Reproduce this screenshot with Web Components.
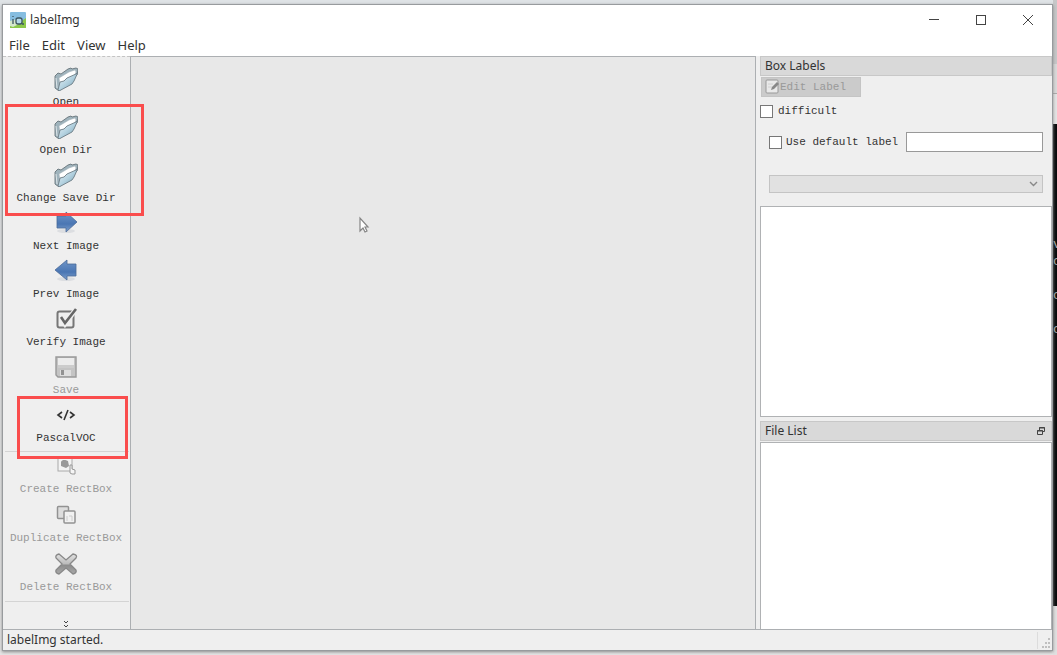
<!DOCTYPE html>
<html lang="en">
<head>
<meta charset="utf-8">
<title>labelImg</title>
<style>
  html, body { height: 100%; margin: 0; }
  body { font: 12px/16px "Noto Sans", "Open Sans", sans-serif; color: #333; background: #e3e4e5; overflow: hidden; }
</style>
</head>
<body>
<desk-top></desk-top>

<script>
const define = (name, html) => customElements.define(name, class extends HTMLElement {
  constructor() {
    super();
    this.attachShadow({ mode: 'open' }).innerHTML =
      '<style>*{box-sizing:border-box}button{font:inherit;color:inherit;border:0;background:none;padding:0;margin:0}svg{display:block}</style>' +
      (typeof html === 'function' ? html(this) : html);
  }
});

const folder = `
  <defs><linearGradient id="f" x1="0" y1="0" x2="1" y2="1"><stop offset="0" stop-color="#f2f7f9"/><stop offset=".5" stop-color="#b4d2e0"/><stop offset="1" stop-color="#6b96aa"/></linearGradient></defs>
  <path d="M1 9 4 6 7 7 14 2 17 1 18 2 22 1 24 2 23 8 5 24 1 21Z" fill="#9fb3bc" stroke="#66747b" stroke-width=".9"/>
  <path d="M5 11 15 5 21 3 22 5 20 10 6 17Z" fill="#fff" stroke="#a4b1b8" stroke-width=".5"/>
  <path d="M4 23 6 15 10 14 13 11 22 7 24 5 20 14 18 17 5 24Z" fill="url(#f)" stroke="#6c7c85" stroke-width=".9"/>
  <path d="M2 11 3 21" stroke="#dce5e9" fill="none"/>`;
const arrow = (d) => `
  <defs><linearGradient id="a" x1="0" y1="0" x2="0" y2="1"><stop offset="0" stop-color="#6f95c8"/><stop offset=".6" stop-color="#4a76b3"/><stop offset="1" stop-color="#7fa0cd"/></linearGradient></defs>
  <ellipse cx="12" cy="20" rx="9" ry="2" fill="#dcdee1"/><path d="${d}" fill="url(#a)" stroke="#4a6a98" stroke-width=".8"/>`;
const icons = {
  open: folder,
  next: arrow('M3 5H12V1L23 11 12 21V17H3Z'),
  prev: arrow('M22 5H13V1L1 11 13 21V17H22Z'),
  verify: `<rect x="3.500" y="4.500" width="16" height="16" rx="2" fill="none" stroke="#777" stroke-width="2"/><path d="M7 11 11 17 22 2" fill="none" stroke="#efefef" stroke-width="5"/><path d="M7 10 11 16 22 2" fill="none" stroke="#666" stroke-width="2.600"/>`,
  save: `<path d="M2 2H22V22H4L2 20Z" fill="#c4c4c4" stroke="#999" stroke-width="1.400"/><rect x="4" y="3" width="16" height="10" fill="#ececec"/><path d="M4 10H20V13H4Z" fill="#ccc"/><path d="M6 15H17V21H6Z" fill="#dedede"/><path d="M7 15H10V20H7Z" fill="#929292"/>`,
  code: `<path d="M8 9 4 12 8 15M16 9 20 12 16 15M14 7 10 17" fill="none" stroke="#333" stroke-width="1.600"/>`,
  create: `<rect x="4" y="3" width="14" height="14" fill="#f3f3f3" stroke="#aaa"/><path d="M7 8C8 5 12 6 14 7L15 12 12 14 7 12Z" fill="#999"/><path d="M16 19V11L18 11V15L21 16V20H18Z" fill="#f5f5f5" stroke="#999"/>`,
  duplicate: `<rect x="3.500" y="3.500" width="11" height="12" rx="1" fill="#ddd" stroke="#929292" stroke-width="1.500"/><rect x="10" y="8" width="11" height="12" rx="1" fill="#f1f1f1" stroke="#929292" stroke-width="1.500"/><path d="M13 18V13M15 13H18V18" stroke="#ccc" fill="none"/>`,
  remove: `<defs><linearGradient id="x" x1="0" y1="0" x2="0" y2="1"><stop stop-color="#e2e2e2"/><stop offset=".5" stop-color="#bbb"/><stop offset=".55" stop-color="#8b8b8b"/><stop offset="1" stop-color="#aaa"/></linearGradient></defs><path d="M5 2 12 8 19 2Q24 3 22 6L16 12 22 18Q23 21 19 22L12 16 5 22Q1 21 2 18L8 12 2 6Q1 3 5 2Z" fill="url(#x)" stroke="#888" stroke-width="1.300"/>`
};

define('tool-item', el => `
  <style>
    :host { display: block; }
    button { display: flex; flex-direction: column; align-items: center; gap: 3px; width: 100%; height: 48px; white-space: nowrap; font: 11px/16px "Liberation Mono", monospace; color: #333; }
    button:disabled { color: #999; }
    svg { width: 24px; height: 24px; flex: none; }
  </style>
  <button type="button" ${el.hasAttribute('disabled') ? 'disabled' : ''}><svg viewBox="0 0 24 24" aria-hidden="true">${icons[el.getAttribute('icon')]}</svg><slot></slot></button>`);

define('mark-box', `<style>:host{display:block;box-sizing:border-box;position:absolute;border:3px solid #fa4d4d;z-index:2;pointer-events:none}</style>`);

define('title-bar', `
  <style>
    :host { display: flex; align-items: center; height: 30px; background: #fff; padding: 0 1px 0 7px; }
    h1 { font: inherit; margin: 0 auto 0 4px; }
    button { width: 47px; height: 30px; display: grid; place-items: center; }
  </style>
  <svg width="16" height="16" viewBox="0 0 16 16" aria-hidden="true"><rect width="16" height="16" rx="1" fill="#86bde0"/><path d="M0 10 6 8 9 11 16 6V16H0Z" fill="#8cc84b"/><path d="M0 9 7 7 9 12 3 15 0 14Z" fill="#d5e8cb"/><rect x="6" y="6" width="6" height="6" rx="2" fill="#b4d8e8" stroke="#3c5560" stroke-width="1.300"/><path d="M3 7V12M3 4V5M12 12H14" stroke="#3c5560" stroke-width="1.300"/></svg>
  <h1>labelImg</h1>
  <button type="button" aria-label="Minimize"><svg width="12" height="12"><path d="M1 5.500H11" stroke="#444"/></svg></button>
  <button type="button" aria-label="Maximize"><svg width="12" height="12"><rect x="1.500" y="1.500" width="9" height="9" fill="none" stroke="#444"/></svg></button>
  <button type="button" aria-label="Close"><svg width="12" height="12"><path d="M1 1 11 11M11 1 1 11" stroke="#444"/></svg></button>`);

define('menu-bar', `
  <style>:host { display: flex; gap: 12px; box-sizing: border-box; height: 21px; padding: 0 6px 2px; background: #fff; font-size: 13px; } nav { display: contents; }</style>
  <nav><button type="button">File</button><button type="button">Edit</button><button type="button">View</button><button type="button">Help</button></nav>`);

define('tool-bar', `
  <style>
    :host { display: flex; flex-direction: column; position: relative; width: 127px; flex: none; padding: 10px 1px 0 0; box-sizing: border-box; border-top: 1px dashed #c4c4c4; background: #efefef; }
    .group { display: grid; gap: 1px; padding: 2px 0 1px; border: solid #d4d4d4; border-width: 1px 0; margin: 0 0 0 2px; }
    .group tool-item { margin-left: -2px; }
    .more { margin: auto auto 0; height: 10px; }
    .dirs { left: 2px; top: 47px; width: 139px; height: 112px; }
    .format { left: 14px; top: 339px; width: 111px; height: 63px; }
  </style>
  <tool-item icon="open">Open</tool-item>
  <tool-item icon="open">Open Dir</tool-item>
  <tool-item icon="open">Change Save Dir</tool-item>
  <tool-item icon="next">Next Image</tool-item>
  <tool-item icon="prev">Prev Image</tool-item>
  <tool-item icon="verify">Verify Image</tool-item>
  <tool-item icon="save" disabled>Save</tool-item>
  <tool-item icon="code">PascalVOC</tool-item>
  <div class="group">
    <tool-item icon="create" disabled>Create RectBox</tool-item>
    <tool-item icon="duplicate" disabled>Duplicate RectBox</tool-item>
    <tool-item icon="remove" disabled>Delete RectBox</tool-item>
  </div>
  <button class="more" type="button" aria-label="More tools"><svg width="6" height="8"><path d="M1 1 3 3 5 1M1 5 3 7 5 5" fill="none" stroke="#444"/></svg></button>
  <mark-box class="dirs"></mark-box>
  <mark-box class="format"></mark-box>`);

define('image-canvas', `
  <style>
    :host { display: block; position: relative; flex: 1; background: #e8e8e8; border: 1px solid #acafb2; border-bottom: 0; }
    svg { position: absolute; left: 227px; top: 159px; }
  </style>
  <svg width="12" height="18" aria-hidden="true"><path d="M2 2V15L5 12 7 16 9 15 7 11H10Z" fill="#fff" stroke="#858585" stroke-width="1.200"/></svg>`);

define('dock-title', `
  <style>
    :host { display: flex; align-items: center; justify-content: space-between; height: 20px; flex: none; padding: 0 6px 0 4px; box-sizing: border-box; background: #d9d9d9; border: 1px solid #c8c8c8; }
    h2 { font: inherit; margin: 0; }
  </style>
  <h2><slot></slot></h2><slot name="action"></slot>`);

define('label-dock', `
  <style>
    :host { display: flex; flex-direction: column; height: 361px; flex: none; font: 11px/16px "Liberation Mono", monospace; }
    dock-title { font: 12px/16px "Noto Sans", sans-serif; }
    .edit { display: flex; align-items: center; align-self: flex-start; width: 100px; height: 20px; margin: 1px 0 0 1px; padding-left: 3px; color: #999; background: #cbcbcb; border: 1px solid #c4c4c4; }
    label { display: flex; align-items: center; gap: 4px; white-space: nowrap; }
    input { appearance: none; margin: 0; background: #fff; border: 1px solid #777; border-radius: 0; }
    input[type=checkbox] { width: 13px; height: 13px; }
    .difficult { margin: 6px 0 0; gap: 5px; }
    .default { display: flex; align-items: center; gap: 8px; margin: 13px 9px 0 9px; }
    input[type=text] { flex: 1; min-width: 0; height: 20px; border-color: #999; }
    .combo { position: relative; display: block; margin: 23px 9px 0; }
    select { appearance: none; display: block; width: 100%; height: 18px; border: 1px solid #c4c4c4; border-radius: 0; background: #e1e1e1; opacity: 1; }
    .combo svg { position: absolute; right: 5px; top: 6px; pointer-events: none; }
    .list { flex: 1; margin-top: 13px; background: #fff; border: 1px solid #b0b2b4; }
  </style>
  <dock-title>Box Labels</dock-title>
  <button class="edit" type="button" disabled><svg width="15" height="16" viewBox="0 0 15 16" aria-hidden="true"><rect x="1" y="1" width="12" height="13" rx="1" fill="#e9e9e9" stroke="#999"/><path d="M3 5H8M3 8H7" stroke="#d0d0d0"/><path d="M6 11 7 8 12 3 14 5 9 10Z" fill="#888"/></svg>Edit Label</button>
  <label class="difficult"><input type="checkbox">difficult</label>
  <div class="default"><label><input type="checkbox">Use default label</label><input type="text" aria-label="Default label"></div>
  <div class="combo"><select disabled aria-label="Filter labels"></select><svg width="9" height="6"><path d="M1 1 4.500 4.500 8 1" fill="none" stroke="#888" stroke-width="1.400"/></svg></div>
  <div class="list"></div>`);

define('file-dock', `
  <style>
    :host { display: flex; flex-direction: column; flex: 1; margin-top: 4px; }
    .list { flex: 1; margin-top: 1px; background: #fff; border: 1px solid #b0b2b4; border-bottom: 0; }
  </style>
  <dock-title>File List<button slot="action" type="button" aria-label="Float"><svg width="8" height="8"><path d="M2.500 3V.5H7.500V4.500H6M2 1H8M.5 3.500H5.500V7.500H.5ZM0 4H6" fill="none" stroke="#444"/></svg></button></dock-title>
  <div class="list"></div>`);

define('status-bar', `
  <style>
    :host { display: flex; align-items: center; justify-content: space-between; height: 21px; flex: none; padding-left: 4px; background: #efefef; }
    .grip { display: flex; align-items: end; height: 17px; width: 15px; border-left: 1px solid #dcdcdc; }
  </style>
  <span>labelImg started.</span>
  <span class="grip"><svg width="14" height="12"><path d="M10 1h2v2h-2zM7 5h2v2H7zM10 5h2v2h-2zM4 9h2v2H4zM7 9h2v2H7zM10 9h2v2h-2z" fill="#bfbfbf"/></svg></span>`);

define('app-window', `
  <style>
    :host { display: flex; flex-direction: column; flex: 1; min-width: 0; margin: 4px 0 4px 2px; border: 1px solid #989b9e; background: #efefef; box-shadow: 0 1px 3px #888; z-index: 1; }
    main { display: flex; flex: 1; min-height: 0; }
    aside { display: flex; flex-direction: column; width: 292px; flex: none; margin-left: 4px; }
    status-bar { border-top: 1px solid #acafb2; }
  </style>
  <title-bar></title-bar>
  <menu-bar></menu-bar>
  <main>
    <tool-bar></tool-bar>
    <image-canvas></image-canvas>
    <aside><label-dock></label-dock><file-dock></file-dock></aside>
  </main>
  <status-bar></status-bar>`);

define('back-windows', `
  <style>
    :host { display: flex; flex-direction: column; width: 4px; flex: none; overflow: hidden; background: #e0e0e0; }
    .a { height: 64px; background: #c6c7c8; }
    .b { height: 30px; background: #d9d9d9; border-bottom: 1px solid #aaa; }
    .c { height: 30px; background: #e3e3e3; }
    pre { flex: 1; margin: 0 0 49px; padding-top: 112px; background: #080a0b; color: #aaa; font: 13px/17px "Liberation Mono", monospace; overflow: hidden; }
  </style>
  <div class="a"></div><div class="b"></div><div class="c"></div>
  <pre aria-hidden="true">v
c

c

c</pre>`);

define('desk-top', `
  <style>:host { display: flex; height: 100%; background: linear-gradient(#dfe3e6, #e5e5e5); }</style>
  <app-window></app-window><back-windows></back-windows>`);
</script>
</body>
</html>
